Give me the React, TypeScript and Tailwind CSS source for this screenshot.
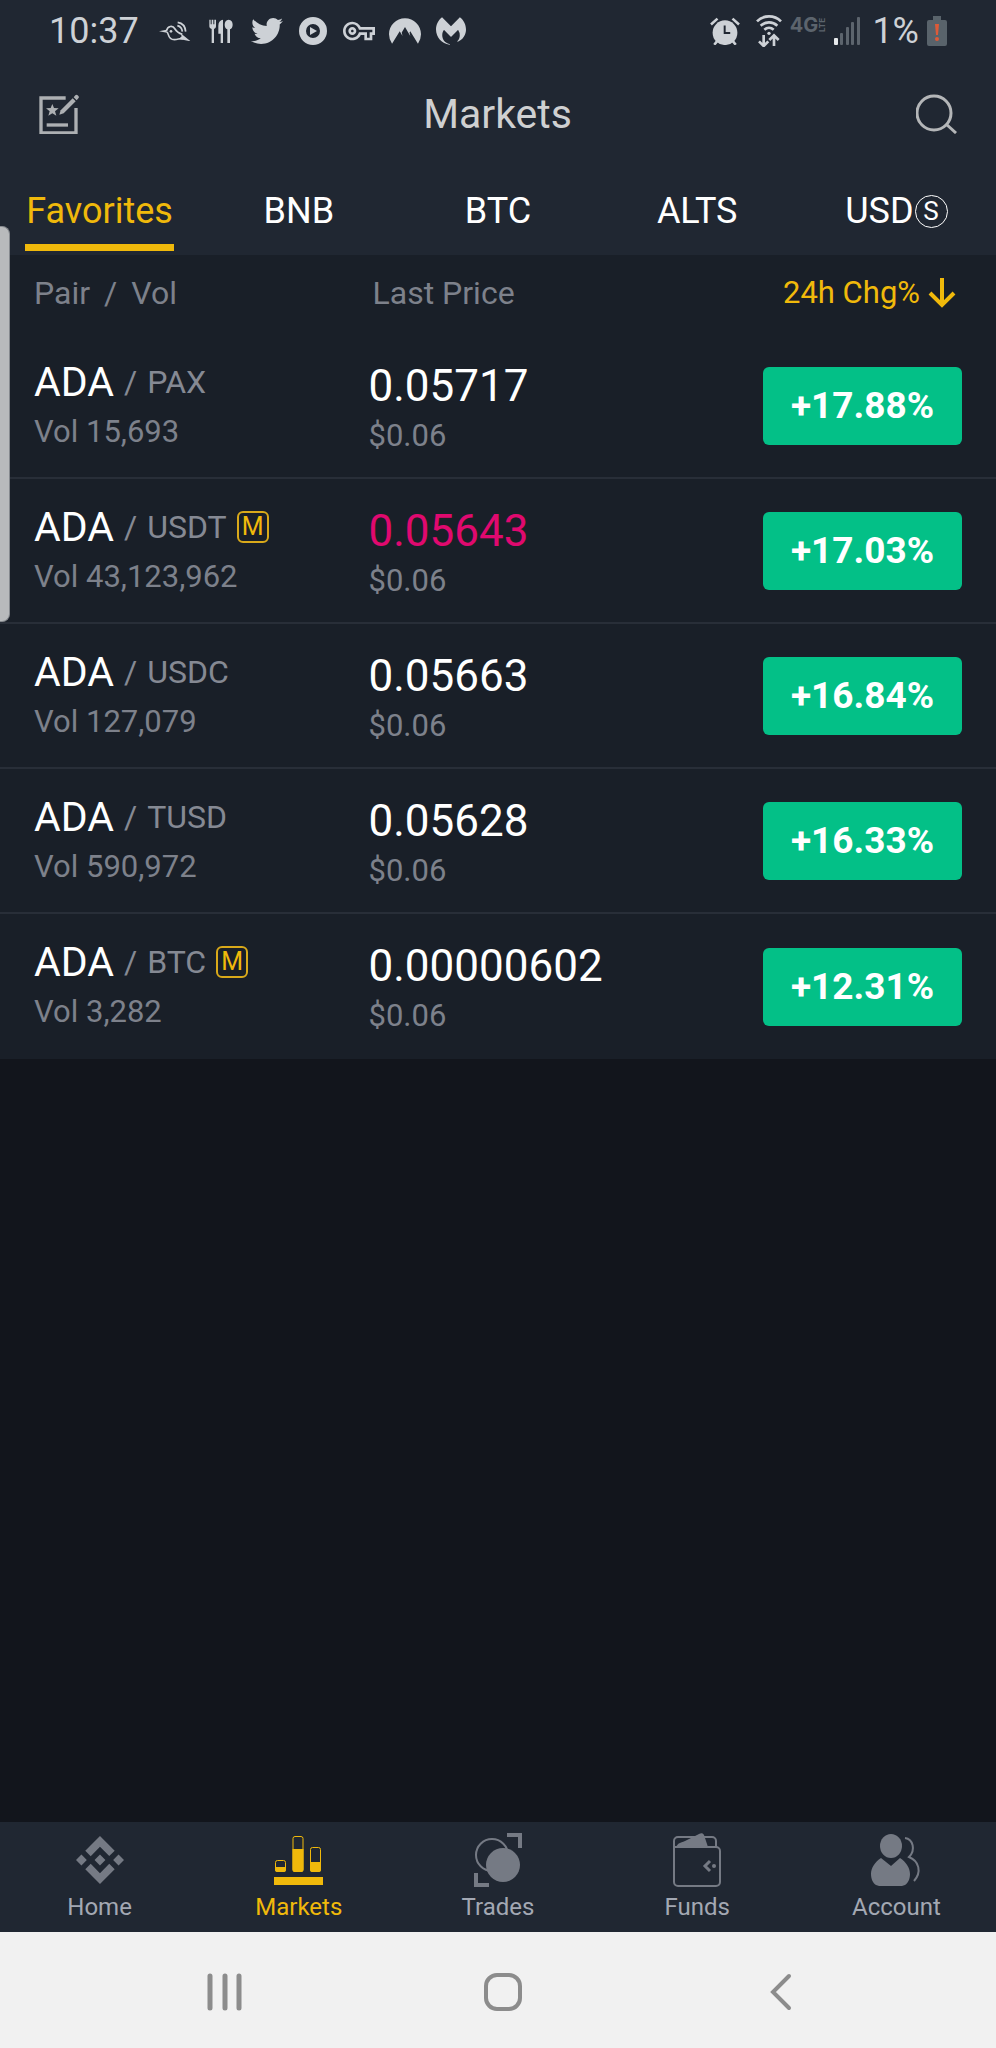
import type { ReactNode } from 'react'
import { FaTwitter } from 'react-icons/fa'
import { SiBinance, SiMalwarebytes, SiNordvpn } from 'react-icons/si'
import { MdOutlineVpnKey } from 'react-icons/md'

type Market = {
  base: string
  quote: string
  volume: string
  price: string
  fiat: string
  change: string
  margin?: boolean
  falling?: boolean
}

const MARKETS: Market[] = [
  { base: 'ADA', quote: 'PAX', volume: '15,693', price: '0.05717', fiat: '$0.06', change: '+17.88%' },
  { base: 'ADA', quote: 'USDT', volume: '43,123,962', price: '0.05643', fiat: '$0.06', change: '+17.03%', margin: true, falling: true },
  { base: 'ADA', quote: 'USDC', volume: '127,079', price: '0.05663', fiat: '$0.06', change: '+16.84%' },
  { base: 'ADA', quote: 'TUSD', volume: '590,972', price: '0.05628', fiat: '$0.06', change: '+16.33%' },
  { base: 'ADA', quote: 'BTC', volume: '3,282', price: '0.00000602', fiat: '$0.06', change: '+12.31%', margin: true },
]

const TABS = ['Favorites', 'BNB', 'BTC', 'ALTS', 'USD']

function BirdIcon() {
  return (
    <svg viewBox="0 0 96 62" className="w-8" fill="none" stroke="currentColor" strokeWidth="5" strokeLinejoin="round">
      <path d="M0 31 22 26 24 35Z" fill="currentColor" stroke="none" />
      <path d="M22 30C26 14 41 12 48 24 52 31 58 36 70 40" />
      <path d="M23 33C31 35 24 56 46 56 58 56 64 50 72 54" />
      <path d="M95 61 64 36 68 46 60 54Z" fill="currentColor" stroke="none" />
      <circle cx="36" cy="31" r="4" fill="currentColor" stroke="none" />
      <path d="M56 4C70 6 79 16 80 32M55 14C64 16 69 22 70 32" />
    </svg>
  )
}

function CutleryIcon() {
  return (
    <svg viewBox="0 0 72 74" className="w-6" fill="currentColor">
      <path d="M1 2h4v14h3V2h5v14h3V2h5v20c0 5-3 7-6 8v42H8V30c-4-1-7-3-7-8Z" />
      <path d="M42 2v70h-7V44h-7V20C28 9 34 3 42 2Z" />
      <path d="M59 2c8 0 12 7 12 15 0 7-3 12-8 14v41h-8V31c-5-2-8-7-8-14 0-8 4-15 12-15Z" />
    </svg>
  )
}

function PlayDiscIcon() {
  return (
    <svg viewBox="0 0 28 28" className="w-7" fill="currentColor">
      <path fillRule="evenodd" d="M14 0a14 14 0 1 0 0 28 14 14 0 0 0 0-28Zm0 7a7 7 0 1 1 0 14 7 7 0 0 1 0-14Z" />
      <path d="M11 10 18 14 11 18Z" />
    </svg>
  )
}

function AlarmIcon() {
  return (
    <svg viewBox="0 0 92 88" className="w-[30px]" fill="none" stroke="currentColor" strokeWidth="8">
      <path d="M3 23 23 5M89 23 69 5" />
      <path d="m22 74-9 11M70 74l9 11" />
      <circle cx="46" cy="48" r="38" fill="currentColor" stroke="none" />
      <path d="M45 26v23h17" stroke="#202732" strokeWidth="6" />
    </svg>
  )
}

function WifiTransferIcon() {
  return (
    <svg viewBox="0 0 78 98" className="w-[26px]" fill="none" stroke="currentColor" strokeWidth="8">
      <path d="M3 19C23-1 55-1 75 19M14 32c14-13 36-13 50 0M25 44c8-7 20-7 28 0" />
      <circle cx="39" cy="55" r="5" fill="currentColor" stroke="none" />
      <path d="M23 60v32M9 79l14 14 14-14M54 93V62M40 75l14-14 14 14" />
    </svg>
  )
}

function SignalIcon() {
  return (
    <svg viewBox="0 0 26 28" className="w-[26px] text-[#5c646d]" fill="currentColor">
      <rect x="0" y="21" width="4" height="7" rx="1" fill="#e6e9eb" />
      <rect x="6" y="16" width="3" height="12" rx="1" />
      <rect x="12" y="10" width="3" height="18" rx="1" />
      <rect x="17" y="5" width="3" height="23" rx="1" />
      <rect x="23" y="0" width="3" height="28" rx="1" />
    </svg>
  )
}

function BatteryIcon() {
  return (
    <svg viewBox="0 0 20 30" className="w-5">
      <path d="M6 0h8v4h4a2 2 0 0 1 2 2v22a2 2 0 0 1-2 2H2a2 2 0 0 1-2-2V6a2 2 0 0 1 2-2h4Z" fill="#59636b" />
      <path d="M8 8h4l-1 11H9Z" fill="#dd5a38" />
      <circle cx="10" cy="23" r="2" fill="#dd5a38" />
    </svg>
  )
}

function EditFavoritesIcon() {
  return (
    <svg viewBox="0 0 120 122" className="w-10" fill="none" stroke="currentColor" strokeWidth="10">
      <path d="M80 12H6v105h105V42" />
      <path d="M23 93h64" />
      <path d="m40 30 5 12 14 1-11 9 4 13-12-7-12 7 4-13-11-9 14-1Z" fill="currentColor" stroke="none" />
      <path d="m61 62 4-13 36-36 9 9-36 36Z" fill="currentColor" stroke="none" />
      <path d="m104 10 5-6a5 5 0 0 1 7 0l2 2a5 5 0 0 1 0 7l-5 6Z" fill="currentColor" stroke="none" />
    </svg>
  )
}

function SearchIcon() {
  return (
    <svg viewBox="0 0 41 40" className="w-[41px]" fill="none" stroke="currentColor" strokeWidth="3">
      <circle cx="18" cy="19" r="17" />
      <path d="m30 30 10 9" />
    </svg>
  )
}

function MarketsIcon() {
  return (
    <svg viewBox="0 0 98 98" className="w-[49px]" fill="currentColor">
      <g fill="none" stroke="currentColor" strokeWidth="2">
        <rect x="3" y="49" width="20" height="22" rx="4" />
        <rect x="38" y="1" width="20" height="70" rx="4" />
        <rect x="73" y="23" width="20" height="48" rx="4" />
      </g>
      <path d="M2 62h22v6a4 4 0 0 1-4 4H6a4 4 0 0 1-4-4ZM37 26h22v42a4 4 0 0 1-4 4H41a4 4 0 0 1-4-4ZM72 52h22v16a4 4 0 0 1-4 4H76a4 4 0 0 1-4-4Z" />
      <path d="M0 82h98v16H0Z" />
    </svg>
  )
}

function TradesIcon() {
  return (
    <svg viewBox="0 0 50 56" className="w-[50px]" fill="none" stroke="currentColor">
      <circle cx="19" cy="23" r="16" strokeWidth="2" />
      <circle cx="30" cy="33" r="17" fill="currentColor" stroke="none" />
      <path d="M34 3h13v13M3 41v12h13" strokeWidth="4" />
    </svg>
  )
}

function FundsIcon() {
  return (
    <svg viewBox="0 0 48 54" className="w-12" fill="none" stroke="currentColor" strokeWidth="2">
      <path d="M1 14h42a4 4 0 0 1 4 4v31a4 4 0 0 1-4 4H5a4 4 0 0 1-4-4V8a4 4 0 0 1 4-4h34a4 4 0 0 1 4 4v6" />
      <path d="M3 14c2-4 4-4 9-6L26 1c2-1 4-1 5 1l4 12Z" fill="currentColor" stroke="none" />
      <path d="m37 28-5 5 5 5" strokeWidth="3" />
      <circle cx="41" cy="33" r="2" fill="currentColor" stroke="none" />
    </svg>
  )
}

function AccountIcon() {
  return (
    <svg viewBox="0 0 50 54" className="w-[50px]" fill="currentColor">
      <ellipse cx="20" cy="13" rx="11" ry="12" />
      <path d="M10 25 20 33 29 25C35 29 39 35 39 41 39 46 37 50 34 52 32 53 30 53 27 53H12C9 53 7 53 5 52 2 50 0 46 0 41 0 35 4 29 10 25Z" />
      <path d="M34 5C42 6 45 17 38 24 48 28 51 39 43 48" fill="none" stroke="currentColor" strokeWidth="2" />
    </svg>
  )
}

const NAV: { label: string; icon: ReactNode; active?: boolean }[] = [
  { label: 'Home', icon: <SiBinance size={48} /> },
  { label: 'Markets', icon: <MarketsIcon />, active: true },
  { label: 'Trades', icon: <TradesIcon /> },
  { label: 'Funds', icon: <FundsIcon /> },
  { label: 'Account', icon: <AccountIcon /> },
]

function StatusBar() {
  const apps = [
    <BirdIcon />,
    <CutleryIcon />,
    <FaTwitter size={32} />,
    <PlayDiscIcon />,
    <MdOutlineVpnKey size={32} />,
    <SiNordvpn size={32} />,
    <SiMalwarebytes size={30} />,
  ]
  return (
    <div className="flex h-[62px] items-center justify-between px-[49px] text-[36px] leading-[42px] text-[#cdd1d6]">
      <div className="flex items-center">
        <span className="w-[110px]">10:37</span>
        <div className="flex items-center gap-[14px]">
          {apps.map((icon, i) => (
            <span key={i} className="flex w-8 justify-center">{icon}</span>
          ))}
        </div>
      </div>
      <div className="flex items-center">
        <AlarmIcon />
        <span className="ml-4"><WifiTransferIcon /></span>
        <span className="mr-1 mb-3 ml-2 flex items-center font-[Inter] text-xl leading-5 font-bold text-[#5c646d]">
          4G
          <span className="rotate-180 text-[8px] leading-2 [writing-mode:vertical-rl]">LTE</span>
        </span>
        <span className="ml-1"><SignalIcon /></span>
        <span className="ml-3">1%</span>
        <span className="ml-2"><BatteryIcon /></span>
      </div>
    </div>
  )
}

function MarketRow({ market, last }: { market: Market; last: boolean }) {
  const line = last ? '' : 'border-b-2 border-[#282e38]'
  return (
    <tr className="h-[145px]">
      <td className={`pt-[22px] pl-[34px] align-top ${line}`}>
        <div className="flex items-center gap-[10px] text-[32px] leading-[52px] text-[#858993]">
          <span className="text-[41px] text-white">{market.base}</span>
          <span>/</span>
          <span>{market.quote}</span>
          {market.margin && (
            <span className="flex size-8 items-center justify-center rounded-md border-2 border-[#d9a91a] text-[25px] leading-7 text-[#f0b90b]">M</span>
          )}
        </div>
        <div className="mt-[6px] text-[31px] leading-9 text-[#7d818b]">Vol {market.volume}</div>
      </td>
      <td className={`pt-[26px] align-top ${line}`}>
        <div className={`text-[44px] leading-[52px] ${market.falling ? 'text-[#e0096f]' : 'text-white'}`}>{market.price}</div>
        <div className="mt-[6px] text-[31px] leading-9 text-[#7d818b]">{market.fiat}</div>
      </td>
      <td className={`pr-[34px] align-middle ${line}`}>
        <span className="ml-auto flex h-[78px] w-[199px] items-center justify-center rounded-md bg-[#03c087] text-[37px] font-bold text-white">
          {market.change}
        </span>
      </td>
    </tr>
  )
}

export default function App() {
  return (
    <div className="relative flex min-h-screen flex-col bg-[#12151c] font-[Roboto,sans-serif]">
      <header className="bg-[#202732]">
        <StatusBar />
        <div className="flex h-[104px] items-center justify-between px-[39px]">
          <button type="button" aria-label="Edit favorites" className="text-[#adb0b3]"><EditFavoritesIcon /></button>
          <h1 className="text-[41px] leading-[48px] text-[#cfd0d1]">Markets</h1>
          <button type="button" aria-label="Search" className="text-[#b4b6b8]"><SearchIcon /></button>
        </div>
        <nav className="grid h-[89px] grid-cols-5 text-[36px] leading-[42px]">
          {TABS.map((tab, i) => (
            <button key={tab} type="button" className="flex items-start justify-center pt-6">
              <span
                className={
                  i === 0
                    ? 'border-b-7 border-[#f0b90b] px-px pb-3 text-[#f0b90b]'
                    : 'flex items-center gap-px text-white'
                }
              >
                {tab}
                {tab === 'USD' && (
                  <span className="flex size-[33px] items-center justify-center rounded-full border border-white text-[26px] leading-8">S</span>
                )}
              </span>
            </button>
          ))}
        </nav>
      </header>

      <main className="flex-1">
        <table className="w-full table-fixed border-separate border-spacing-0 bg-[#191f28]">
          <thead>
            <tr className="h-[79px] text-left text-[32px] leading-9 text-[#7d818b]">
              <th className="w-[37%] pb-1 pl-[34px] font-normal">
                <span className="flex gap-[14px]">
                  <span>Pair</span>
                  <span>/</span>
                  <span>Vol</span>
                </span>
              </th>
              <th className="w-[37%] pb-1 pl-1 font-normal">Last Price</th>
              <th className="w-[26%] pr-[40px] pb-1 font-normal">
                <button type="button" className="ml-auto flex items-center gap-2 text-[31px] text-[#f0b90b]">
                  24h Chg%
                  <svg viewBox="0 0 28 30" className="w-7" fill="none" stroke="currentColor" strokeWidth="4">
                    <path d="M14 0v27M2 15l12 12 12-12" />
                  </svg>
                </button>
              </th>
            </tr>
          </thead>
          <tbody>
            {MARKETS.map((m, i) => (
              <MarketRow key={m.quote} market={m} last={i === MARKETS.length - 1} />
            ))}
          </tbody>
        </table>
      </main>

      <nav className="grid h-[110px] grid-cols-5 bg-[#202732] pt-[11px]">
        {NAV.map(item => (
          <a
            key={item.label}
            href="#"
            className={`flex flex-col items-center gap-1 ${item.active ? 'text-[#f0b90b]' : 'text-[#757a84]'}`}
          >
            <span className="flex h-[54px] items-center">{item.icon}</span>
            <span className={`text-2xl leading-8 ${item.active ? '' : 'text-[#a3a8b3]'}`}>{item.label}</span>
          </a>
        ))}
      </nav>

      {/* Android system buttons */}
      <div className="grid h-[116px] grid-cols-3 items-center bg-[#f1f1f1] pt-1 pr-[76px] pl-[86px] text-[#8c8c8c]">
        <button type="button" aria-label="Recent apps" className="flex justify-center">
          <svg viewBox="0 0 36 38" className="w-9" stroke="currentColor" strokeWidth="5" strokeLinecap="round">
            <path d="M3 3v32M18 3v32M32 3v32" />
          </svg>
        </button>
        <button type="button" aria-label="Home" className="flex justify-center">
          <svg viewBox="0 0 40 40" className="w-10" fill="none" stroke="currentColor" strokeWidth="4">
            <rect x="3" y="3" width="34" height="34" rx="11" />
          </svg>
        </button>
        <button type="button" aria-label="Back" className="flex justify-center">
          <svg viewBox="0 0 22 38" className="w-[22px]" fill="none" stroke="currentColor" strokeWidth="4" strokeLinecap="round">
            <path d="M19 3 3 19l16 16" />
          </svg>
        </button>
      </div>

      {/* Edge panel handle */}
      <div className="absolute top-[226px] left-0 h-[396px] w-[10px] rounded-r-lg border border-l-0 border-[#85898e] bg-[#b8babc]" />
    </div>
  )
}
